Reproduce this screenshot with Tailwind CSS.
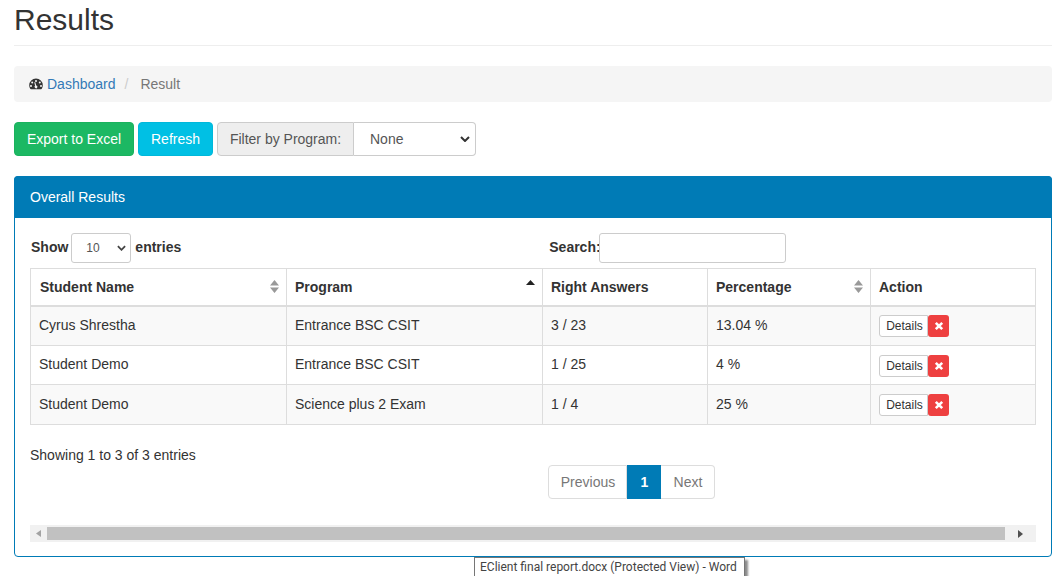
<!DOCTYPE html>
<html>
<head>
<meta charset="utf-8">
<script src="https://cdn.jsdelivr.net/npm/@tailwindcss/browser@4"></script>
</head>
<body class="bg-white">
<div class="relative w-[1064px] h-[576px] overflow-hidden font-['Liberation_Sans',Arial,sans-serif] text-[14px] leading-[20px] text-[#333] pl-[14px] pr-[12px]">
  <div class="h-[46px] border-b border-[#eee] pt-[3px]">
    <h1 class="text-[30px] leading-[33px] font-normal">Results</h1>
  </div>
  <nav class="mt-[20px] h-[36px] bg-[#f5f5f5] rounded-[4px] flex items-center pl-[15px]">
    <svg class="w-[14px] h-[14px] mr-[4px]" viewBox="0 0 14 14"><path fill="#333" fill-rule="evenodd" d="M7 1.500A6.800 6.800 0 0 0 .2 8.300c0 1.300.3 2.500 1 3.500.2.3.4.4.7.4h10.200c.3 0 .5-.1.7-.4.7-1 1-2.200 1-3.500A6.800 6.800 0 0 0 7 1.500ZM7 3a1 1 0 1 1 0 2 1 1 0 0 1 0-2ZM3.200 4.600a1 1 0 1 1 0 2 1 1 0 0 1 0-2Zm7.600 0a1 1 0 1 1 0 2 1 1 0 0 1 0-2ZM2 8a1 1 0 1 1 0 2 1 1 0 0 1 0-2Zm10 0a1 1 0 1 1 0 2 1 1 0 0 1 0-2ZM5.300 5.200l1 .1.9 3.200a1.400 1.400 0 1 1-1.100.3L5.300 5.200Z"/></svg>
    <a class="text-[#337ab7]">Dashboard</a>
    <span class="text-[#ccc] pl-[9px] pr-[12px]">/</span>
    <span class="text-[#777]">Result</span>
  </nav>
  <div class="mt-[20px] flex h-[34px]">
    <button class="w-[120px] bg-[#1cb863] text-white rounded-[4px] border border-[#1ab25e]">Export to Excel</button>
    <button class="w-[75px] ml-[4px] bg-[#00c0e4] text-white rounded-[4px] border border-[#00b8da]">Refresh</button>
    <div class="ml-[4px] flex">
      <span class="w-[137px] bg-[#eee] border border-[#ccc] rounded-l-[4px] text-[#555] flex items-center justify-center">Filter by Program:</span>
      <div class="w-[122px] border border-l-0 border-[#ccc] rounded-r-[4px] flex items-center justify-between pl-[16px] pr-[5px] text-[#555]">
        <span>None</span>
        <svg class="w-[10px] h-[6px]" viewBox="0 0 10 6"><path d="M1 1l4 4 4-4" fill="none" stroke="#333" stroke-width="2"/></svg>
      </div>
    </div>
  </div>
  <section class="mt-[20px] h-[381px] border border-[#007bb6] rounded-[4px]">
    <div class="h-[39px] bg-[#007bb6] text-white flex items-center pl-[16px] pb-[2px] -mt-px -mx-px rounded-t-[4px] pt-px box-content">Overall Results</div>
    <div class="px-[15px]">
      <div class="relative h-[50px] pt-[15px] font-bold flex items-start">
        <div class="flex items-center h-[30px] ml-px">
          <span class="pb-[2px]">Show</span>
          <div class="ml-[3px] mr-[4px] w-[60px] h-[30px] border border-[#ccc] rounded-[3px] flex items-center justify-between pl-[14px] pr-[4px] font-normal text-[12px] text-[#555]">
            <span>10</span>
            <svg class="w-[9px] h-[6px]" viewBox="0 0 10 6"><path d="M1 1l4 4 4-4" fill="none" stroke="#444" stroke-width="2"/></svg>
          </div>
          <span class="pb-[2px]">entries</span>
        </div>
        <div class="flex items-center h-[30px] ml-[368px]">
          <span class="w-[50px] whitespace-nowrap pb-[2px]">Search:</span>
          <div class="w-[187px] h-[30px] border border-[#ccc] rounded-[3px] bg-white"></div>
        </div>
      </div>
      <table class="w-[1005px] table-fixed border-collapse border border-[#ddd]">
        <colgroup><col class="w-[256px]"><col class="w-[256px]"><col class="w-[165px]"><col class="w-[163px]"><col class="w-[165px]"></colgroup>
        <thead>
          <tr class="h-[37px] font-bold text-left">
            <th class="border-x border-[#ddd] border-b-2 pl-[9px]"><div class="flex items-center justify-between pr-[7px]"><span>Student Name</span><svg class="w-[9px] h-[13px]" viewBox="0 0 9 13"><path fill="#999" d="M4.500 0 9 5.500H0zM4.500 13 0 7.500h9z"/></svg></div></th>
            <th class="border-x border-[#ddd] border-b-2 pl-[8px]"><div class="flex items-center justify-between pr-[7px]"><span>Program</span><svg class="w-[9px] h-[13px] -mt-[6px]" viewBox="0 0 9 13"><path fill="#222" d="M4.500 3 9 8H0z"/></svg></div></th>
            <th class="border-x border-[#ddd] border-b-2 pl-[8px]">Right Answers</th>
            <th class="border-x border-[#ddd] border-b-2 pl-[8px]"><div class="flex items-center justify-between pr-[7px]"><span>Percentage</span><svg class="w-[9px] h-[13px]" viewBox="0 0 9 13"><path fill="#999" d="M4.500 0 9 5.500H0zM4.500 13 0 7.500h9z"/></svg></div></th>
            <th class="border-x border-[#ddd] border-b-2 pl-[8px]">Action</th>
          </tr>
        </thead>
        <tbody>
          <tr class="h-[40px] bg-[#f9f9f9]">
            <td class="border border-[#ddd] pl-[8px] pb-[2px]">Cyrus Shrestha</td>
            <td class="border border-[#ddd] pl-[8px] pb-[2px]">Entrance BSC CSIT</td>
            <td class="border border-[#ddd] pl-[8px] pb-[2px]">3 / 23</td>
            <td class="border border-[#ddd] pl-[8px] pb-[2px]">13.04 %</td>
            <td class="border border-[#ddd] pl-[8px]"><div class="flex"><span class="w-[49px] h-[22px] border border-[#ccc] bg-white rounded-l-[3px] text-[12px] leading-[20px] flex items-center justify-center pl-[2px]">Details</span><span class="w-[21px] h-[22px] bg-[#ee4040] rounded-[3px] flex items-center justify-center"><svg class="w-[10px] h-[10px]" viewBox="0 0 10 10"><path d="M1.800 1.800l6.400 6.400M8.200 1.800 1.800 8.200" stroke="#fff" stroke-width="2.600"/></svg></span></div></td>
          </tr>
          <tr class="h-[39px]">
            <td class="border border-[#ddd] pl-[8px] pb-[2px]">Student Demo</td>
            <td class="border border-[#ddd] pl-[8px] pb-[2px]">Entrance BSC CSIT</td>
            <td class="border border-[#ddd] pl-[8px] pb-[2px]">1 / 25</td>
            <td class="border border-[#ddd] pl-[8px] pb-[2px]">4 %</td>
            <td class="border border-[#ddd] pl-[8px] pt-[2px]"><div class="flex"><span class="w-[49px] h-[22px] border border-[#ccc] bg-white rounded-l-[3px] text-[12px] leading-[20px] flex items-center justify-center pl-[2px]">Details</span><span class="w-[21px] h-[22px] bg-[#ee4040] rounded-[3px] flex items-center justify-center"><svg class="w-[10px] h-[10px]" viewBox="0 0 10 10"><path d="M1.800 1.800l6.400 6.400M8.200 1.800 1.800 8.200" stroke="#fff" stroke-width="2.600"/></svg></span></div></td>
          </tr>
          <tr class="h-[40px] bg-[#f9f9f9]">
            <td class="border border-[#ddd] pl-[8px] pb-[2px]">Student Demo</td>
            <td class="border border-[#ddd] pl-[8px] pb-[2px]">Science plus 2 Exam</td>
            <td class="border border-[#ddd] pl-[8px] pb-[2px]">1 / 4</td>
            <td class="border border-[#ddd] pl-[8px] pb-[2px]">25 %</td>
            <td class="border border-[#ddd] pl-[8px]"><div class="flex"><span class="w-[49px] h-[22px] border border-[#ccc] bg-white rounded-l-[3px] text-[12px] leading-[20px] flex items-center justify-center pl-[2px]">Details</span><span class="w-[21px] h-[22px] bg-[#ee4040] rounded-[3px] flex items-center justify-center"><svg class="w-[10px] h-[10px]" viewBox="0 0 10 10"><path d="M1.800 1.800l6.400 6.400M8.200 1.800 1.800 8.200" stroke="#fff" stroke-width="2.600"/></svg></span></div></td>
          </tr>
        </tbody>
      </table>
      <div class="mt-[20px] h-[20px]">Showing 1 to 3 of 3 entries</div>
      <div class="flex h-[34px] ml-[518px] w-[167px] text-[#777]">
        <span class="w-[79px] border border-[#ddd] rounded-l-[4px] flex items-center justify-center pl-px">Previous</span>
        <span class="w-[34px] bg-[#007bb6] text-white font-bold flex items-center justify-center pl-px">1</span>
        <span class="w-[54px] border border-l-0 border-[#ddd] rounded-r-[4px] flex items-center justify-center pl-px">Next</span>
      </div>
      <div class="mt-[26px] w-[1006px] h-[17px] bg-[#f1f1f1] flex items-center">
        <div class="w-[17px] flex justify-center"><svg class="w-[5px] h-[7px]" viewBox="0 0 5 7"><path fill="#a3a3a3" d="M5 0v7L0 3.500z"/></svg></div>
        <div class="w-[958px] h-[13px] bg-[#c1c1c1]"></div>
        <div class="flex-1 flex justify-center"><svg class="w-[5px] h-[8px]" viewBox="0 0 5 8"><path fill="#505050" d="M0 0v8l5-4z"/></svg></div>
      </div>
    </div>
  </section>
  <div class="absolute left-[474px] top-[557px] w-[271px] h-[24px] bg-white border border-[#767676] shadow-[3px_3px_2px_rgba(0,0,0,0.45)] font-['Roboto',sans-serif] text-[12px] leading-[18px] text-[#444] pl-[5px] whitespace-nowrap">EClient final report.docx (Protected View) - Word</div>
</div>
</body>
</html>
